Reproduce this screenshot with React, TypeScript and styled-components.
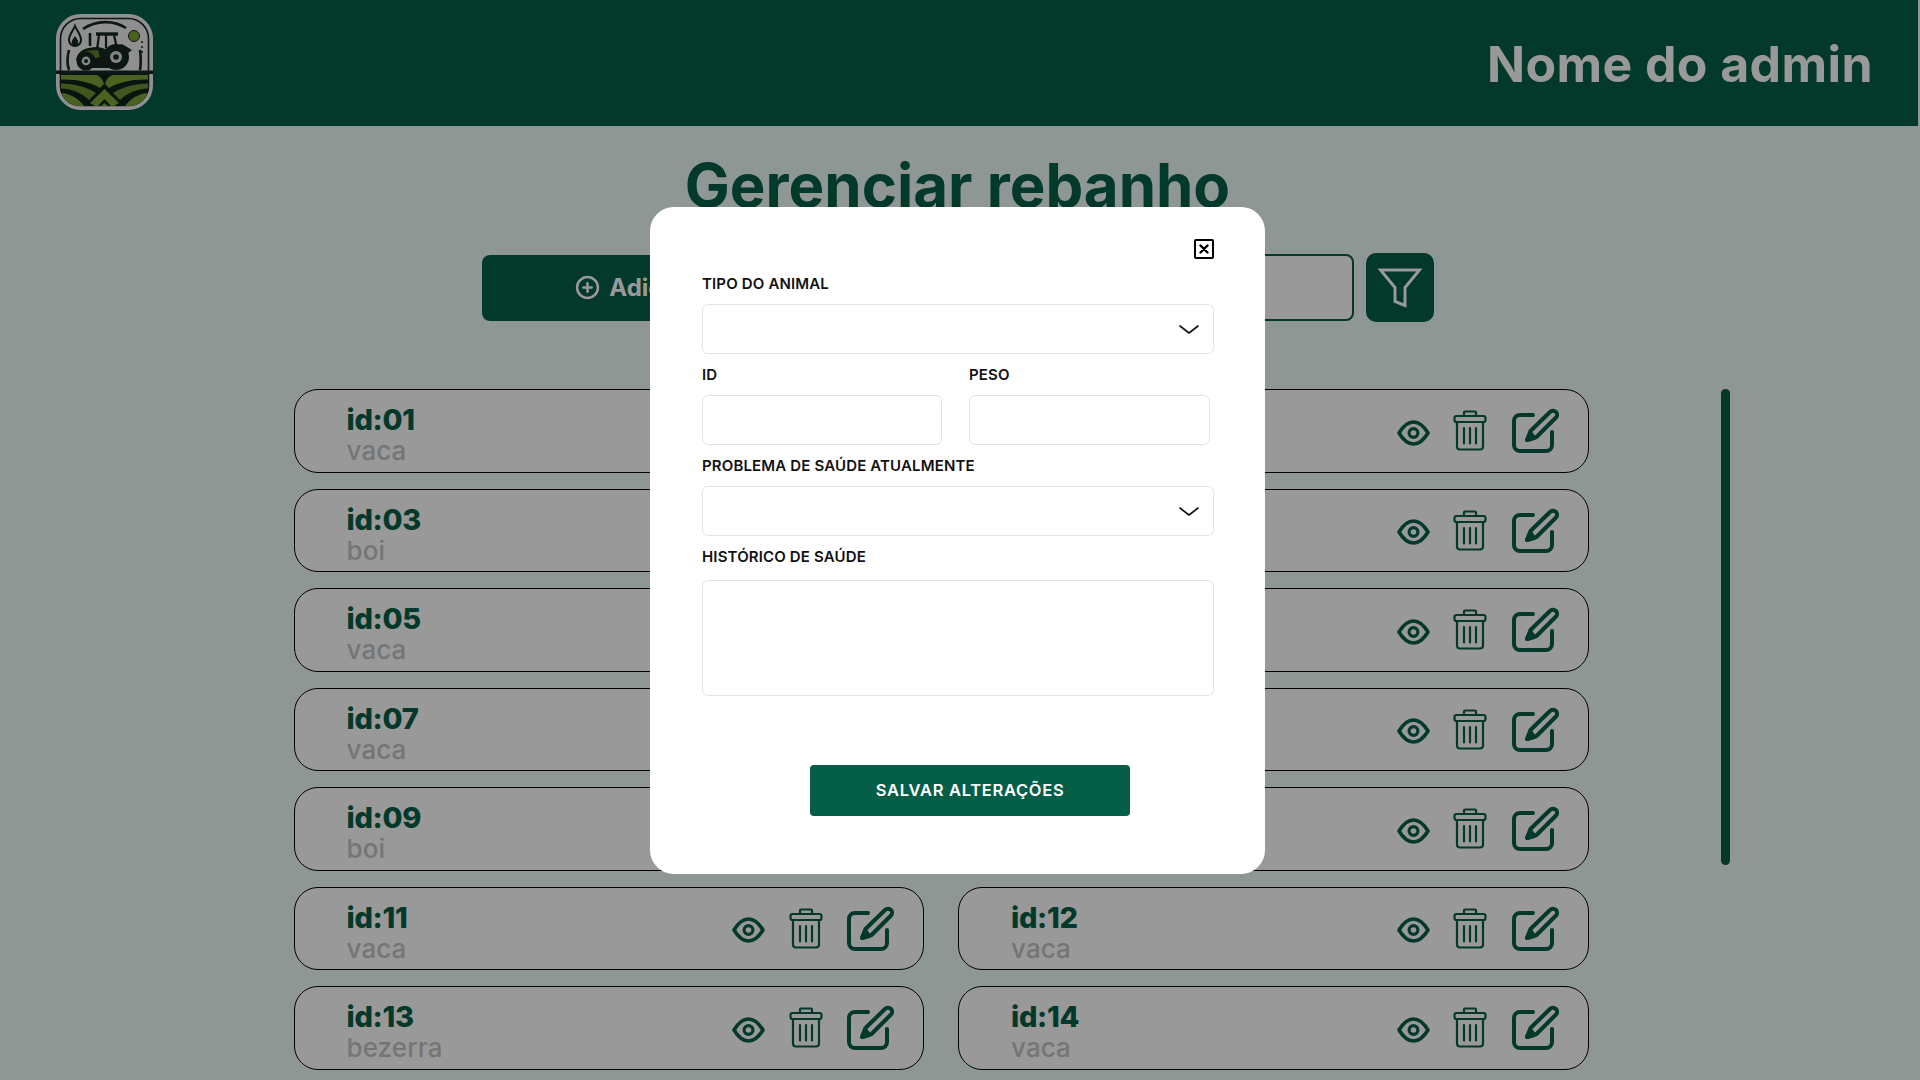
import styled, { createGlobalStyle } from 'styled-components';
import { CirclePlus } from 'lucide-react';

const GREEN = '#055f48';

const animals = [
	{ id: '01', type: 'vaca' },
	{ id: '02', type: 'vaca' },
	{ id: '03', type: 'boi' },
	{ id: '04', type: 'vaca' },
	{ id: '05', type: 'vaca' },
	{ id: '06', type: 'boi' },
	{ id: '07', type: 'vaca' },
	{ id: '08', type: 'bezerra' },
	{ id: '09', type: 'boi' },
	{ id: '10', type: 'vaca' },
	{ id: '11', type: 'vaca' },
	{ id: '12', type: 'vaca' },
	{ id: '13', type: 'bezerra' },
	{ id: '14', type: 'vaca' },
];

const GlobalStyle = createGlobalStyle`
  html, body {
    margin: 0;
    height: 100%;
    overflow: hidden;
    background: #edfcf5;
    font-family: Inter, "Liberation Sans", sans-serif;
  }
  * {
    box-sizing: border-box;
  }
`;

const Page = styled.div`
  width: 1918px;
  height: 1080px;
  overflow: hidden;
`;

const Header = styled.header`
  height: 126px;
  padding: 14px 45px 0 56px;
  display: flex;
  justify-content: space-between;
  align-items: flex-start;
  background: ${GREEN};
`;

const AdminName = styled.span`
  margin-top: 2px;
  font-size: 50px;
  line-height: 96px;
  font-weight: 700;
  letter-spacing: 0.4px;
  color: white;
`;

const Title = styled.h1`
  margin: 21px 3px 30px 0;
  font-size: 60px;
  line-height: 76px;
  font-weight: 700;
  text-align: center;
  color: ${GREEN};
`;

const Toolbar = styled.div`
  display: flex;
  justify-content: center;
  align-items: center;
  gap: 12px;
  height: 69px;
  margin: 0 3px 67px 0;
`;

const AddButton = styled.button`
  width: 416px;
  height: 66px;
  padding: 0 0 0 2px;
  display: flex;
  justify-content: center;
  align-items: center;
  gap: 9px;
  border: none;
  border-radius: 8px;
  background: ${GREEN};
  color: white;
  font: 700 24px Inter, sans-serif;
`;

const SearchInput = styled.input`
  width: 444px;
  height: 67px;
  border: 2px solid ${GREEN};
  border-radius: 8px;
  background: white;
`;

const FilterButton = styled.button`
  width: 68px;
  height: 69px;
  display: flex;
  justify-content: center;
  align-items: center;
  padding: 0;
  border: none;
  border-radius: 10px;
  background: ${GREEN};
`;

const ListArea = styled.div`
  display: flex;
  align-items: flex-start;
  padding-left: 293.5px;
`;

const AnimalGrid = styled.div`
  display: grid;
  grid-template-columns: 630.5px 630.5px;
  column-gap: 34px;
  row-gap: 16px;
`;

const ScrollThumb = styled.div`
  width: 9px;
  height: 476px;
  margin-left: 132.5px;
  border-radius: 5px;
  background: ${GREEN};
`;

const Card = styled.article`
  height: 83.5px;
  padding: 0 29px 0 52px;
  display: flex;
  justify-content: space-between;
  align-items: center;
  border: 1px solid #000;
  border-radius: 24px;
  background: white;
`;

const CardText = styled.div`
  display: flex;
  flex-direction: column;
  margin-top: 4px;
`;

const AnimalId = styled.span`
  font-size: 29px;
  line-height: 36px;
  font-weight: 800;
  letter-spacing: -0.3px;
  color: ${GREEN};
`;

const AnimalType = styled.span`
  font-size: 26px;
  line-height: 25px;
  font-weight: 500;
  letter-spacing: 0.1px;
  color: #c4c4c4;
`;

const CardActions = styled.div`
  display: flex;
  align-items: center;
  gap: 24.5px;
`;

const EyeSvg = styled.svg`
  margin-top: 4px;
  margin-right: -1px;
`;

const Overlay = styled.div`
  position: fixed;
  inset: 0;
  padding-right: 5px;
  display: flex;
  justify-content: center;
  align-items: center;
  background: rgba(0, 0, 0, 0.4);
`;

const Modal = styled.form`
  width: 615px;
  height: 667px;
  padding: 32px 51px 0 52px;
  display: flex;
  flex-direction: column;
  border-radius: 24px;
  background: white;
`;

const CloseButton = styled.button`
  align-self: flex-end;
  width: 20px;
  height: 20px;
  margin-bottom: 13px;
  padding: 0;
  display: flex;
  justify-content: center;
  align-items: center;
  border: 2px solid #000;
  border-radius: 2px;
  background: white;
`;

const Label = styled.label`
  display: block;
  height: 24px;
  margin-bottom: 8px;
  font-size: 15px;
  line-height: 24px;
  font-weight: 600;
  letter-spacing: 0.15px;
  color: #111;
`;

const Field = styled.div`
  margin-bottom: 9px;
`;

const TwoColumns = styled.div`
  display: grid;
  grid-template-columns: 240px 241px;
  column-gap: 27px;
`;

const SelectWrap = styled.div`
  position: relative;
  height: 50px;
`;

const Select = styled.select`
  width: 100%;
  height: 100%;
  appearance: none;
  border: 1.5px solid #e4e4e4;
  border-radius: 6px;
  background: white;
`;

const Chevron = styled.svg`
  position: absolute;
  top: 21px;
  right: 15px;
`;

const TextInput = styled.input`
  display: block;
  width: 100%;
  height: 50px;
  border: 1.5px solid #e4e4e4;
  border-radius: 6px;
  background: white;
`;

const TextArea = styled.textarea`
  display: block;
  width: 100%;
  height: 116px;
  margin-top: 11px;
  border: 1.5px solid #e4e4e4;
  border-radius: 6px;
  background: white;
  resize: none;
`;

const SaveButton = styled.button`
  align-self: flex-start;
  width: 320px;
  height: 51px;
  margin: 60px 0 0 108px;
  border: none;
  border-radius: 4px;
  background: ${GREEN};
  color: white;
  font: 600 16.5px Inter, sans-serif;
  letter-spacing: 0.7px;
`;

const FarmField = () => (
	<>
		<path d="M5 61 H41 C45 63 47 66 48 70 L44 74 C34 68 20 65 5 65.5Z" fill="#7da236" />
		<path d="M5 69.5 C18 69.5 30 73 40 79 L33 86 C26 79 16 75 5 74.5Z" fill="#6c9030" />
		<path d="M6 79 C15 80 23 85 28 92 H13 C9 88 6 84 6 79Z" fill="#7da236" />
	</>
);

const FarmLogo = () => (
	<svg width="97" height="96" viewBox="0 0 97 96">
		<defs>
			<clipPath id="logo-clip">
				<rect x="4" y="4" width="89" height="88" rx="20" />
			</clipPath>
		</defs>
		<rect x="1.5" y="1.5" width="94" height="93" rx="23" fill="#f0f0f0" stroke="#f0f0f0" strokeWidth="3" />
		<rect x="4.5" y="4.5" width="88" height="87" rx="20" fill="#eee" stroke="#14261e" strokeWidth="1.6" />
		<path d="M27 15 C40 6 58 6 70 14" fill="none" stroke="#14261e" strokeWidth="2.6" />
		<path d="M13 36 C11 43 11 50 13 56 M84 36 C85 43 85 50 84 56" fill="none" stroke="#14261e" strokeWidth="2.6" />
		<path d="M19 12 C21 17 25 21 25 26 a6 6 0 0 1 -12 0 C13 21 17 17 19 12Z" fill="#eee" stroke="#14261e" strokeWidth="2" />
		<path d="M19 22 C21 25 23 27 22 29 a3 3 0 0 1 -6 0 C15 27 17 25 19 22Z" fill="#14261e" />
		<circle cx="78" cy="22" r="5.5" fill="#7da236" stroke="#14261e" strokeWidth="1" />
		<circle cx="86" cy="28" r="1" fill="#14261e" />
		<circle cx="86" cy="33" r="1" fill="#14261e" />
		<circle cx="86" cy="38" r="1" fill="#14261e" />
		<path d="M34 19 V32" stroke="#14261e" strokeWidth="2.6" />
		<path d="M40 20 H62" stroke="#14261e" strokeWidth="3.4" />
		<path d="M43 21 L41 36 M58 21 L61 34 M50 21 V34" fill="none" stroke="#14261e" strokeWidth="2.2" />
		<path d="M20 46 C22 36 30 33 42 33 L50 35 L66 30 L76 36 L52 54 H30Z" fill="#14261e" />
		<path d="M24 41 C27 37 33 36 42 36 L44 43 L32 46Z" fill="#5c7f2a" />
		<path d="M48 36 L62 33 L70 37 L52 42Z" fill="#5c7f2a" />
		<circle cx="60" cy="43" r="13" fill="#14261e" />
		<circle cx="60" cy="43" r="6" fill="#dcdcdc" />
		<circle cx="60" cy="43" r="2.8" fill="#14261e" />
		<circle cx="30" cy="47" r="9.5" fill="#14261e" />
		<circle cx="30" cy="47" r="4.4" fill="#dcdcdc" />
		<circle cx="30" cy="47" r="2" fill="#14261e" />
		<g clipPath="url(#logo-clip)">
			<rect x="0" y="57" width="97" height="39" fill="#0e2219" />
			<FarmField />
			<g transform="matrix(-1 0 0 1 97 0)">
				<FarmField />
			</g>
			<path d="M48.5 75 L63 89 L58 92 H55 L48.5 85 L42 92 H39 L34 89Z" fill="#7da236" />
			<path d="M48.5 89 L52 92 H45Z" fill="#7da236" />
		</g>
		<rect x="0" y="56.5" width="97" height="3.5" fill="#14261e" />
	</svg>
);

const FilterIcon = () => (
	<svg width="44" height="40" viewBox="0 0 44 40" fill="none" stroke="white" strokeWidth="3" strokeLinejoin="miter">
		<path d="M2.5 2 H41.5 L27 19.5 V37.5 L17 33.5 V19.5Z" />
	</svg>
);

const EyeIcon = () => (
	<EyeSvg width="33" height="26" viewBox="0 0 33 26" fill="none" stroke={GREEN} strokeWidth="3.6">
		<path d="M2 13 C6.5 5.5 11.5 2 16.5 2 S26.5 5.5 31 13 C26.5 20.5 21.5 24 16.5 24 S6.5 20.5 2 13Z" strokeLinejoin="round" />
		<circle cx="16.5" cy="13" r="4.4" strokeWidth="3.2" />
	</EyeSvg>
);

const TrashIcon = () => (
	<svg width="34" height="41" viewBox="0 0 34 41" fill="none" stroke={GREEN} strokeWidth="2.2" strokeLinecap="round" strokeLinejoin="round">
		<rect x="1.5" y="6" width="31" height="6" rx="2" />
		<path d="M11 6 V2.5 a1 1 0 0 1 1 -1 H22 a1 1 0 0 1 1 1 V6" />
		<path d="M4 12 V36.5 a3 3 0 0 0 3 3 H27 a3 3 0 0 0 3 -3 V12" />
		<path d="M11 18 V33.5 M17 18 V33.5 M23 18 V33.5" />
	</svg>
);

const EditIcon = () => (
	<svg width="47" height="45" viewBox="0 0 47 45" fill="none" stroke={GREEN} strokeWidth="4" strokeLinecap="round" strokeLinejoin="round">
		<path d="M21 7 H8 a6 6 0 0 0 -6 6 V37 a6 6 0 0 0 6 6 H34 a6 6 0 0 0 6 -6 V24" />
		<path d="M15 32 L18.5 23 L38 4 a3.8 3.8 0 0 1 6 5.5 L24.5 29Z" />
		<path d="M15 32 L18.5 25 L22 30Z" fill={GREEN} />
	</svg>
);

const CloseIcon = () => (
	<svg width="10" height="10" viewBox="0 0 10 10" stroke="#000" strokeWidth="2.4" strokeLinecap="round">
		<path d="M1.5 1.5 L8.5 8.5 M8.5 1.5 L1.5 8.5" />
	</svg>
);

const ChevronIcon = () => (
	<Chevron width="20" height="9" viewBox="0 0 20 9" fill="none" stroke="#111" strokeWidth="1.6" strokeLinecap="round" strokeLinejoin="round">
		<path d="M1 1 L10 8 L19 1" />
	</Chevron>
);

export default function App() {
	return (
		<>
			<GlobalStyle />
			<Page>
				<Header>
					<FarmLogo />
					<AdminName>Nome do admin</AdminName>
				</Header>
				<main>
					<Title>Gerenciar rebanho</Title>
					<Toolbar>
						<AddButton type="button">
							<CirclePlus size={25} strokeWidth={2.4} />
							Adicionar animal
						</AddButton>
						<SearchInput type="text" />
						<FilterButton type="button">
							<FilterIcon />
						</FilterButton>
					</Toolbar>
					<ListArea>
						<AnimalGrid>
							{animals.map((animal) => (
								<Card key={animal.id}>
									<CardText>
										<AnimalId>id:{animal.id}</AnimalId>
										<AnimalType>{animal.type}</AnimalType>
									</CardText>
									<CardActions>
										<EyeIcon />
										<TrashIcon />
										<EditIcon />
									</CardActions>
								</Card>
							))}
						</AnimalGrid>
						<ScrollThumb />
					</ListArea>
				</main>
			</Page>
			<Overlay>
				<Modal>
					<CloseButton type="button" aria-label="Fechar">
						<CloseIcon />
					</CloseButton>
					<Field>
						<Label>TIPO DO ANIMAL</Label>
						<SelectWrap>
							<Select />
							<ChevronIcon />
						</SelectWrap>
					</Field>
					<TwoColumns>
						<Field>
							<Label>ID</Label>
							<TextInput type="text" />
						</Field>
						<Field>
							<Label>PESO</Label>
							<TextInput type="text" />
						</Field>
					</TwoColumns>
					<Field>
						<Label>PROBLEMA DE SAÚDE ATUALMENTE</Label>
						<SelectWrap>
							<Select />
							<ChevronIcon />
						</SelectWrap>
					</Field>
					<Field>
						<Label>HISTÓRICO DE SAÚDE</Label>
						<TextArea />
					</Field>
					<SaveButton type="button">SALVAR ALTERAÇÕES</SaveButton>
				</Modal>
			</Overlay>
		</>
	);
}
